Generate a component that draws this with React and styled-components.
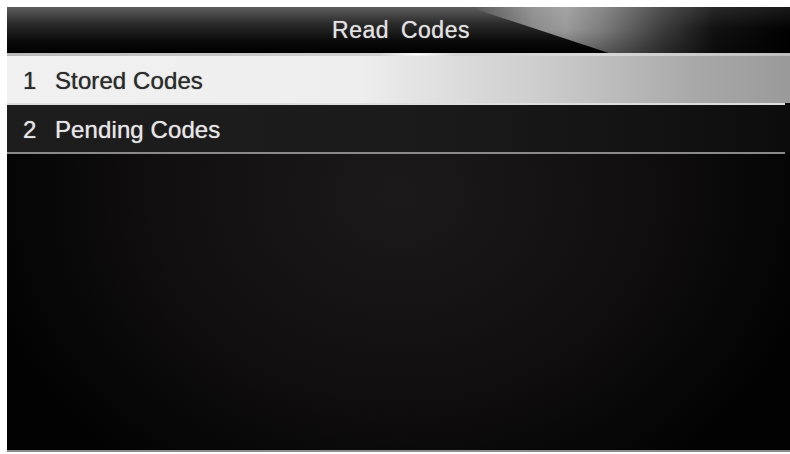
import React from 'react';
import styled, { createGlobalStyle } from 'styled-components';

const GlobalStyle = createGlobalStyle`
  html, body {
    margin: 0;
    padding: 0;
    background: #ffffff;
  }
  body {
    font-family: "Liberation Sans", Arial, sans-serif;
  }
`;

const items = [
  { id: 1, label: 'Stored Codes', selected: true },
  { id: 2, label: 'Pending Codes', selected: false },
];

const Page = styled.div`
  width: 790px;
  height: 454px;
  padding: 7px 0 0 7px;
  box-sizing: border-box;
  overflow: hidden;
`;

const Screen = styled.div`
  width: 783px;
  height: 445px;
  display: flex;
  flex-direction: column;
  border-bottom: 2px solid #8c8c8c;
  box-sizing: border-box;
  background:
    radial-gradient(ellipse 55% 80% at 50% 42%, #1c191a 0%, #110f10 55%, #020202 100%);
`;

const Header = styled.div`
  position: relative;
  height: 46px;
  flex: none;
  display: flex;
  align-items: center;
  justify-content: center;
  overflow: hidden;
  background: linear-gradient(to bottom, #5e5e5e 0%, #2c2c2c 35%, #0a0a0a 75%, #000 100%);

  &::after {
    content: '';
    position: absolute;
    top: 0;
    bottom: 0;
    left: 462px;
    right: 0;
    clip-path: polygon(0 0, 100% 0, 100% 100%, 140px 100%);
    background:
      linear-gradient(to bottom, rgba(255, 255, 255, 0.1) 0%, rgba(0, 0, 0, 0) 50%, rgba(0, 0, 0, 0.3) 100%),
      linear-gradient(to right, #444 0%, #8a8a8a 20%, #9a9a9a 30%, #7a7a7a 42%, #3c3c3c 60%, #111 76%, #000 100%);
  }
`;

const Title = styled.span`
  position: relative;
  z-index: 1;
  color: #e2e2e2;
  font-size: 23px;
  letter-spacing: 0.5px;
  word-spacing: 5px;
  margin-left: 5px;
  margin-top: 1px;
  text-shadow: 0 0 1px rgba(230, 230, 230, 0.7);
`;

const Glare = styled.div`
  height: 3px;
  flex: none;
  background:
    radial-gradient(ellipse 40px 3px at 410px 50%, #ffffff 0%, rgba(255, 255, 255, 0) 100%),
    linear-gradient(to right, #b8b8b8 0%, #cfcfcf 45%, #d8d8d8 75%, #bdbdbd 100%);
`;

const Row = styled.div`
  height: 47px;
  flex: none;
  display: flex;
  align-items: center;
  padding: 3px 0 0 16px;
  box-sizing: border-box;
  font-size: 24px;
  color: ${p => (p.selected ? '#2b2b2b' : '#e6e6e6')};
  text-shadow: ${p =>
    p.selected ? '0 0 1px rgba(40, 40, 40, 0.8)' : '0 0 1px rgba(235, 235, 235, 0.8)'};
  background: ${p =>
    p.selected
      ? 'linear-gradient(to right, #f1f1f1 0%, #eeeeee 45%, #cdcdcd 68%, #a8a8a8 88%, #9a9a9a 100%)'
      : 'linear-gradient(to right, #1d1d1d 0%, #1b1b1b 50%, #121212 85%, #0c0c0c 100%)'};
`;

const Num = styled.span`
  width: 32px;
  flex: none;
`;

const Label = styled.span`
  letter-spacing: 0.1px;
`;

const Divider = styled.div`
  height: 2px;
  flex: none;
  margin-right: 5px;
  background: ${p => (p.light ? '#dedede' : '#8a8a8a')};
`;

const Body = styled.div`
  flex: 1;
`;

export default function App() {
  return (
    <>
      <GlobalStyle />
      <Page>
        <Screen>
          <Header>
            <Title>Read Codes</Title>
          </Header>
          <Glare />
          {items.map(item => (
            <React.Fragment key={item.id}>
              <Row selected={item.selected}>
                <Num>{item.id}</Num>
                <Label>{item.label}</Label>
              </Row>
              <Divider light={item.selected} />
            </React.Fragment>
          ))}
          <Body />
        </Screen>
      </Page>
    </>
  );
}
